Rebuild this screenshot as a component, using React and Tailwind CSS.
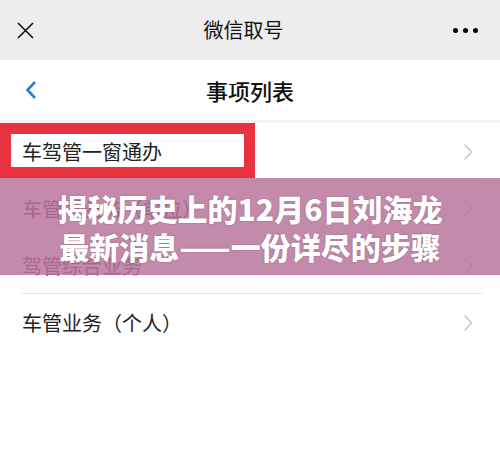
import React from 'react';

const font = { fontFamily: '"Noto Sans CJK SC", "Noto Sans", sans-serif' };

const Chevron = () => (
  <svg width="10" height="18" viewBox="0 0 10 18" fill="none" stroke="#c7c7cc" strokeWidth="1.5">
    <path d="M1.5 1.5 L8.5 9 L1.5 16.5" />
  </svg>
);

const Row = ({ label, boxed, last }) => (
  <div className="relative h-[57px] flex items-center justify-between pl-[22px] pr-[27px]">
    {boxed && (
      <div className="absolute left-0 top-0 w-[255px] h-[55px] border-[11px] border-[#e8323f]" />
    )}
    <span className="relative text-[20px] text-[#222]">{label}</span>
    <Chevron />
    {!last && <div className="absolute left-[22px] right-[18px] bottom-0 h-px bg-[#e6e6e6]" />}
  </div>
);

export default function App() {
  return (
    <div className="w-[500px] h-[455px] bg-white overflow-hidden relative" style={font}>
      {/* WeChat top bar */}
      <div className="h-[60px] bg-[#ededed] flex items-center justify-between px-[17px]">
        <svg width="17" height="17" viewBox="0 0 17 17" stroke="#111" strokeWidth="1.6">
          <path d="M1 1 L16 16 M16 1 L1 16" />
        </svg>
        <span className="text-[20px] text-[#111]">微信取号</span>
        <div className="flex gap-[5px] pr-[5px]">
          <span className="w-[5px] h-[5px] rounded-full bg-black" />
          <span className="w-[5px] h-[5px] rounded-full bg-black" />
          <span className="w-[5px] h-[5px] rounded-full bg-black" />
        </div>
      </div>

      {/* Page header */}
      <div className="h-[60px] flex items-center relative">
        <svg className="ml-[25px]" width="12" height="20" viewBox="0 0 12 20" fill="none" stroke="#2f7fd0" strokeWidth="2.6">
          <path d="M10 2 L2.5 10 L10 18" />
        </svg>
        <span className="absolute left-0 right-0 text-center text-[22px] text-[#111] font-medium">事项列表</span>
      </div>
      <div className="h-[3px] bg-[#f2f2f2]" />

      {/* List */}
      <div className="relative">
        <Row label="车驾管一窗通办" boxed />
        <Row label="车管所业务（单位）" />
        <Row label="驾管综合业务" />
        <Row label="车管业务（个人）" last />

        {/* Overlay banner */}
        <div className="absolute left-0 right-0 top-[55px] h-[97px] bg-[rgba(186,117,156,0.85)] flex flex-col items-center justify-center">
          <div className="text-white text-[30px] font-black leading-[38px] tracking-[0px] [text-shadow:0_0_2px_rgba(0,0,0,0.25)]">
            揭秘历史上的12月6日刘海龙
          </div>
          <div className="text-white text-[30px] font-black leading-[38px] [text-shadow:0_0_2px_rgba(0,0,0,0.25)]">
            最新消息——一份详尽的步骤
          </div>
        </div>
      </div>
    </div>
  );
}
